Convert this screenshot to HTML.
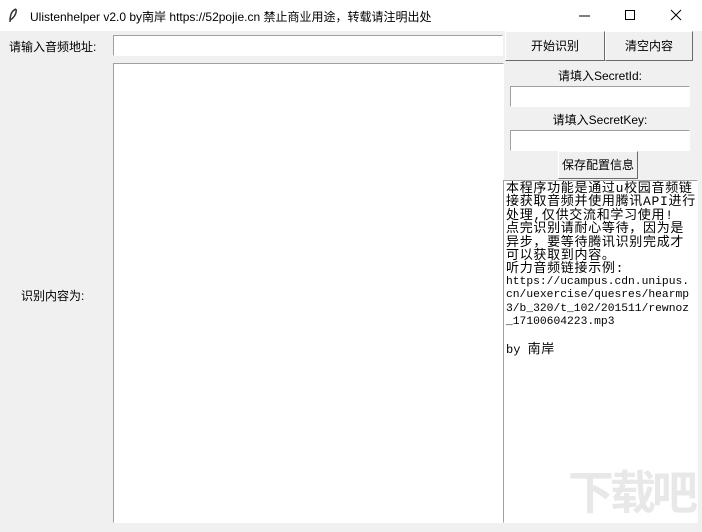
<html><head><style>
html,body{margin:0;width:702px;height:532px;overflow:hidden}
body{background:#f0f0f0;position:relative;font-family:"Liberation Sans","Noto Sans CJK SC",sans-serif;font-size:12px;color:#000}
.a{position:absolute;white-space:nowrap}
.ent{position:absolute;background:#fff;border-top:1px solid #a0a0a0;border-left:1px solid #a0a0a0;border-right:1px solid #fff;border-bottom:1px solid #fff;box-sizing:border-box}
.btn{position:absolute;background:#f0f0f0;border:1px solid #fff;border-right:1px solid #696969;border-bottom:1px solid #696969;box-sizing:border-box;text-align:center;font-size:12px}
.cj{font-size:13px;letter-spacing:0.7px}
</style></head><body>
<div class="a" style="left:0;top:0;width:702px;height:31px;background:#fff"></div>
<svg class="a" style="left:7px;top:8px" width="12" height="16"><path d="M9 1 C4 3 3 8 3 14 M9 1 C10 5 7 10 3 12" stroke="#333" fill="none" stroke-width="1.5"/></svg>
<div class="a" style="left:30px;top:8px;font-size:12px">Ulistenhelper v2.0 by南岸 https://52pojie.cn 禁止商业用途，转载请注明出处</div>
<svg class="a" style="left:575px;top:8px" width="120" height="16"><path d="M4 8H15" stroke="#000"/><path d="M50.5 2.5h9v9h-9z" stroke="#000" fill="none"/><path d="M96 2l10 10M106 2L96 12" stroke="#000"/></svg>
<div class="a" style="left:9px;top:38px">请输入音频地址:</div>
<div class="ent" style="left:113px;top:35px;width:390px;height:21px"></div>
<div class="ent" style="left:113px;top:63px;width:391px;height:460px"></div>
<div class="a" style="left:21px;top:287px">识别内容为:</div>
<div class="btn" style="left:505px;top:31px;width:100px;height:30px;line-height:28px">开始识别</div>
<div class="btn" style="left:605px;top:31px;width:88px;height:30px;line-height:28px">清空内容</div>
<div class="a" style="left:505px;top:67px;width:190px;text-align:center">请填入SecretId:</div>
<div class="ent" style="left:510px;top:86px;width:180px;height:21px"></div>
<div class="a" style="left:505px;top:111px;width:190px;text-align:center">请填入SecretKey:</div>
<div class="ent" style="left:510px;top:130px;width:180px;height:21px"></div>
<div class="btn" style="left:558px;top:151px;width:80px;height:28px;line-height:26px">保存配置信息</div>
<div class="ent" style="left:503px;top:180px;width:195px;height:343px;padding:1px 0 0 2px;font-family:'Liberation Mono','WenQuanYi Zen Hei',monospace;font-size:12px;line-height:13.4px;white-space:pre;overflow:hidden"><span class="cj">本程序功能是通过u校园音频链
接获取音频并使用腾讯API进行
处理,仅供交流和学习使用!
点完识别请耐心等待，因为是
异步，要等待腾讯识别完成才
可以获取到内容。
听力音频链接示例:</span>
<span style="font-size:11.3px">https://ucampus.cdn.unipus.
cn/uexercise/quesres/hearmp
3/b_320/t_102/201511/rewnoz
_17100604223.mp3</span>

by <span class="cj">南岸</span></div>
<div class="a" style="left:568px;top:462px;font-size:46px;line-height:56px;color:#e8e8e8;font-weight:bold;font-family:'Noto Sans CJK SC',sans-serif;letter-spacing:-4px">下载吧</div>
</body></html>
